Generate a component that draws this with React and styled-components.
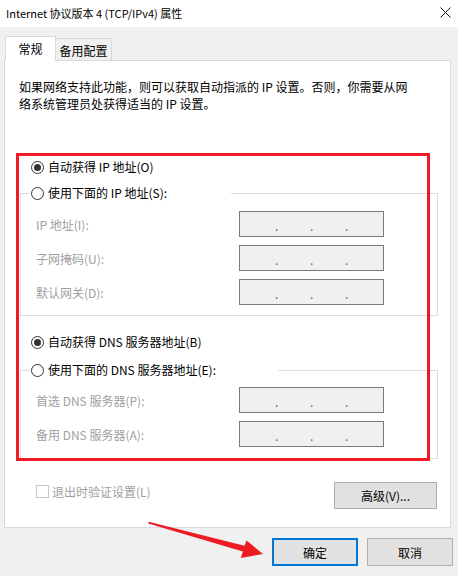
import React from "react";
import styled, { createGlobalStyle } from "styled-components";

const Global = createGlobalStyle`
  html, body {
    margin: 0;
    padding: 0;
    background: #f0f0f0;
    overflow: hidden;
  }
  * { box-sizing: border-box; }
`;

const FONT = `"Noto Sans CJK SC", "Noto Sans", sans-serif`;

const Window = styled.div`
  position: relative;
  width: 458px;
  height: 576px;
  background: #f0f0f0;
  font-family: ${FONT};
  font-size: 12px;
  color: #000;
`;

const TitleBar = styled.div`
  height: 27px;
  background: #fff;
  display: flex;
  align-items: center;
  justify-content: space-between;
  padding: 0 7px 2px 6px;
  font-size: 11px;
`;

const Body = styled.div`
  padding: 9px 0 0 4px;
`;

const TabRow = styled.div`
  display: flex;
  align-items: flex-end;
  height: 24px;
  margin-left: 1px;
`;

const Tab = styled.div`
  position: relative;
  display: flex;
  align-items: center;
  justify-content: center;
  border: 1px solid #d9d9d9;
  border-bottom: none;
  ${(p) =>
    p.$active
      ? `width: 51px; height: 25px; margin-bottom: -1px; background: #fff; z-index: 1; padding-bottom: 2px;`
      : `width: 56px; height: 22px; border-left: none; background: #f0f0f0; padding-top: 2px;`}
`;

const Panel = styled.div`
  width: 447px;
  height: 468px;
  background: #fff;
  border: 1px solid #d9d9d9;
  padding: 17px 12px 0 15px;
`;

const Description = styled.p`
  margin: 0 0 0 -1px;
  line-height: 17px;
`;

const RadioRow = styled.label`
  display: flex;
  align-items: center;
  height: 16px;
  line-height: 16px;
  gap: 4px;
  margin-left: ${(p) => p.$indent || 0}px;
  margin-top: ${(p) => p.$top || 0}px;
  white-space: nowrap;
`;

const RadioCircle = styled.span`
  position: relative;
  width: 13px;
  height: 13px;
  border: 1px solid #333;
  border-radius: 50%;
  background: #fff;
  flex: none;
  &::after {
    content: "";
    display: ${(p) => (p.$checked ? "block" : "none")};
    position: absolute;
    left: 2px;
    top: 2px;
    width: 7px;
    height: 7px;
    border-radius: 50%;
    background: #333;
  }
`;

const Group = styled.fieldset`
  margin: ${(p) => p.$top}px 0 0 0;
  padding: ${(p) => p.$padTop}px 0 ${(p) => p.$padBottom}px 9px;
  border: 1px solid #dcdcdc;
  width: 418px;
  min-width: 0;
`;

const Legend = styled.legend`
  padding: 0 0 0 1px;
  width: ${(p) => p.$width}px;
  height: 16px;
`;

const Rows = styled.div`
  display: flex;
  flex-direction: column;
  gap: 8px;
  padding-left: 6px;
`;

const FieldRow = styled.div`
  display: grid;
  grid-template-columns: 203px 145px;
  align-items: center;
  height: 26px;
`;

const FieldLabel = styled.span`
  color: #a0a0a0;
  white-space: nowrap;
`;

const IpBox = styled.div`
  display: flex;
  align-items: center;
  height: 26px;
  padding-left: 3px;
  background: #f0f0f0;
  border: 1px solid #7a7a7a;
  color: #6d6d6d;
`;

const IpSeg = styled.span`
  width: 32px;
`;

const IpDot = styled.span`
  width: 3px;
  text-align: center;
  line-height: 16px;
  padding-top: 3px;
`;

const BottomRow = styled.div`
  display: flex;
  justify-content: space-between;
  align-items: flex-start;
  width: 418px;
  margin-top: 23px;
`;

const CheckRow = styled.label`
  display: flex;
  align-items: center;
  gap: 3px;
  margin: 2px 0 0 16px;
  color: #a0a0a0;
  height: 14px;
`;

const CheckBox = styled.span`
  width: 13px;
  height: 13px;
  border: 1px solid #c6c6c6;
  background: #fff;
`;

const Button = styled.button`
  width: ${(p) => p.$w}px;
  height: ${(p) => p.$h}px;
  margin-right: ${(p) => p.$right || 0}px;
  background: #e1e1e1;
  border: ${(p) => (p.$default ? "2px solid #0078d7" : "1px solid #adadad")};
  font-family: ${FONT};
  font-size: 12px;
  color: #000;
  padding: 0;
`;

const Footer = styled.div`
  display: flex;
  justify-content: flex-end;
  gap: 9px;
  padding-right: 5px;
  margin-top: 10px;
`;

const RedBox = styled.div`
  position: absolute;
  left: 16px;
  top: 153px;
  width: 414px;
  height: 308px;
  border: 3px solid #ed1c24;
  pointer-events: none;
`;

const Overlay = styled.svg`
  position: absolute;
  left: 0;
  top: 0;
  pointer-events: none;
`;

function IpField() {
  return (
    <IpBox>
      <IpSeg />
      <IpDot>.</IpDot>
      <IpSeg />
      <IpDot>.</IpDot>
      <IpSeg />
      <IpDot>.</IpDot>
      <IpSeg />
    </IpBox>
  );
}

function Radio({ checked, children, ...rest }) {
  return (
    <RadioRow {...rest}>
      <RadioCircle $checked={checked} />
      <span>{children}</span>
    </RadioRow>
  );
}

export default function App() {
  return (
    <Window>
      <Global />
      <TitleBar>
        <span>Internet 协议版本 4 (TCP/IPv4) 属性</span>
        <svg width="11" height="11" viewBox="0 0 11 11">
          <path d="M0.5 0.5 L10.5 10.5 M10.5 0.5 L0.5 10.5" stroke="#1a1a1a" strokeWidth="1" />
        </svg>
      </TitleBar>
      <Body>
        <TabRow>
          <Tab $active>常规</Tab>
          <Tab>备用配置</Tab>
        </TabRow>
        <Panel>
          <Description>
            如果网络支持此功能，则可以获取自动指派的 IP 设置。否则，你需要从网
            <br />
            络系统管理员处获得适当的 IP 设置。
          </Description>

          <Radio checked $indent={11} $top={47}>自动获得 IP 地址(O)</Radio>
          <Group $top={10} $padTop={10} $padBottom={10}>
            <Legend $width={201}>
              <Radio>使用下面的 IP 地址(S):</Radio>
            </Legend>
            <Rows>
              <FieldRow>
                <FieldLabel>IP 地址(I):</FieldLabel>
                <IpField />
              </FieldRow>
              <FieldRow>
                <FieldLabel>子网掩码(U):</FieldLabel>
                <IpField />
              </FieldRow>
              <FieldRow>
                <FieldLabel>默认网关(D):</FieldLabel>
                <IpField />
              </FieldRow>
            </Rows>
          </Group>

          <Radio checked $indent={11} $top={18}>自动获得 DNS 服务器地址(B)</Radio>
          <Group $top={12} $padTop={9} $padBottom={11}>
            <Legend $width={248}>
              <Radio>使用下面的 DNS 服务器地址(E):</Radio>
            </Legend>
            <Rows>
              <FieldRow>
                <FieldLabel>首选 DNS 服务器(P):</FieldLabel>
                <IpField />
              </FieldRow>
              <FieldRow>
                <FieldLabel>备用 DNS 服务器(A):</FieldLabel>
                <IpField />
              </FieldRow>
            </Rows>
          </Group>

          <BottomRow>
            <CheckRow>
              <CheckBox />
              <span>退出时验证设置(L)</span>
            </CheckRow>
            <Button $w={103} $h={27} $right={1}>高级(V)...</Button>
          </BottomRow>
        </Panel>
        <Footer>
          <Button $w={86} $h={28} $default>确定</Button>
          <Button $w={86} $h={28}>取消</Button>
        </Footer>
      </Body>

      <RedBox />
      <Overlay width="458" height="576" viewBox="0 0 458 576">
        <polygon
          points="148.6,521.7 244.5,545.7 246.5,540.5 263,554 240.8,558 242.9,551.5 148.2,523.5"
          fill="#ed1c24"
        />
      </Overlay>
    </Window>
  );
}
